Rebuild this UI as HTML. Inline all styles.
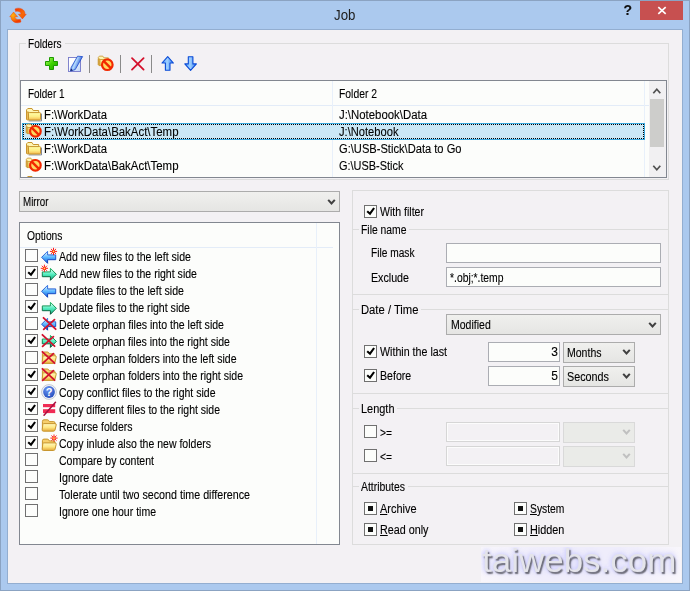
<!DOCTYPE html>
<html><head><meta charset="utf-8"><title>Job</title>
<style>
*{box-sizing:border-box;margin:0;padding:0}
html,body{width:690px;height:591px;overflow:hidden;background:#abc9ee}
body{position:relative;font-family:"Liberation Sans",sans-serif;font-size:12px;color:#000;line-height:13px}
.abs{position:absolute}
#frame{position:absolute;left:0;top:0;width:690px;height:591px;background:#abc9ee;border:1px solid #8ba3c2}
#client{position:absolute;left:7px;top:29px;width:676px;height:555px;background:#f3f1f4;border:1px solid #93aed0}
.t{position:absolute;white-space:pre;height:13px;line-height:13px;transform-origin:0 0;-webkit-text-stroke:0.12px #000}
.t u{text-decoration:underline}
.gb{position:absolute;border:1px solid #dcdcdc}
.bgp{position:absolute;background:#f3f1f4;height:13px}
.lv{position:absolute;background:#fcfdfb;border:1px solid #828790}
.edit{position:absolute;background:#fcfdfb;border:1px solid #abadb3;height:20px}
.edit.dis{background:#f3f1f4;border-color:#d6d6d6;box-shadow:inset 0 0 0 1px #fcfcfc}
.combo{position:absolute;border:1px solid #acacac;background:linear-gradient(#f0f0ee,#e5e5e3);height:21px}
.combo.dis{border-color:#d9d9d9;background:#eaebe8}
.cb{position:absolute;width:13px;height:13px;border:1px solid #707070;background:#fcfdfb}
.cb i{position:absolute;left:3px;top:3px;width:5px;height:5px;background:#111}
.hl{position:absolute;height:1px;background:#dcdcdc}
.vl{position:absolute;width:1px;background:#e8f0fa}
.sep{position:absolute;width:1px;height:18px;background:#8a8a8a}
</style></head><body>
<div id="frame"></div>
<div class="abs" style="left:640px;top:1px;width:43px;height:19px;background:#c75050"></div>
<svg class="abs" style="left:657px;top:6px" width="10" height="9" viewBox="0 0 10 9"><path d="M1.3 1.2 L8.7 7.8 M8.7 1.2 L1.3 7.8" stroke="#fff" stroke-width="1.7"/></svg>
<div id="client"></div>

<svg class="abs" style="left:10px;top:8px;overflow:visible" width="16" height="16" viewBox="0 0 16 16"><defs><linearGradient id="ai1" x1="0" y1="0" x2="1" y2="1"><stop offset="0" stop-color="#f23400"/><stop offset="0.6" stop-color="#f86a08"/><stop offset="1" stop-color="#f24800"/></linearGradient><radialGradient id="ai2" cx="0.75" cy="0.7" r="0.7"><stop offset="0" stop-color="#ffb010"/><stop offset="0.6" stop-color="#f87808"/><stop offset="1" stop-color="#f23c00"/></radialGradient></defs><path d="M5 0.9 C8 -0.5 12.2 0 14.2 3 C14.8 4 15 5 14.9 6.2 L16.3 6.2 L12.4 10.9 L8.4 6.2 L11 6.2 C11 4.6 9.6 3.3 7.6 3.3 C6.8 3.3 6.2 3.4 5.6 3.6 Z" fill="url(#ai1)" stroke="#f03800" stroke-width="0.4"/><path d="M5 0.9 C8 -0.5 12.2 0 14.2 3 C14.8 4 15 5 14.9 6.2 L16.3 6.2 L12.4 10.9 L8.4 6.2 L11 6.2 C11 4.6 9.6 3.3 7.6 3.3 C6.8 3.3 6.2 3.4 5.6 3.6 Z" transform="rotate(180 8 7.45)" fill="url(#ai2)" stroke="#f04000" stroke-width="0.4"/></svg>
<div class="gb" style="left:19px;top:43px;width:650px;height:137px"></div>
<div class="lv" style="left:20px;top:80px;width:647px;height:98px"></div>
<svg class="abs" style="left:44px;top:56px;overflow:visible" width="16" height="16" viewBox="0 0 16 16"><defs><linearGradient id="g1" x1="0" y1="0" x2="1" y2="1"><stop offset="0" stop-color="#b8ff70"/><stop offset="0.5" stop-color="#3fd400"/><stop offset="1" stop-color="#1fa000"/></linearGradient></defs><path d="M5.5 1.5h4v4h4v4h-4v4h-4v-4h-4v-4h4z" fill="url(#g1)" stroke="#1c9a00" stroke-width="1" stroke-linejoin="round"/></svg>
<svg class="abs" style="left:67px;top:56px;overflow:visible" width="16" height="16" viewBox="0 0 16 16"><defs><linearGradient id="g2" x1="0" y1="0" x2="1" y2="1"><stop offset="0.3" stop-color="#ffffff"/><stop offset="1" stop-color="#bcd4f8"/></linearGradient><linearGradient id="g3" x1="0" y1="0" x2="1" y2="0.5"><stop offset="0.1" stop-color="#1a48cc"/><stop offset="0.5" stop-color="#b4dcff"/><stop offset="0.9" stop-color="#1a48cc"/></linearGradient></defs><rect x="1.5" y="1.5" width="12" height="14" fill="url(#g2)" stroke="#7478c8" stroke-width="0.9"/><path d="M10.6 0.2 L15.6 0.6 L8.2 13.6 L3.5 15 L4.2 11.4 Z" fill="url(#g3)" stroke="#1a48cc" stroke-width="0.8" stroke-linejoin="round"/><path d="M3.5 15 L4 12.6 L6 14.2 Z" fill="#182060"/></svg>
<div class="sep" style="left:89px;top:55px"></div>
<svg class="abs" style="left:98px;top:56px;overflow:visible" width="16" height="16" viewBox="0 0 16 16"><g transform="translate(-0.9,-1.9) scale(0.82)"><defs><linearGradient id="g4" x1="0" y1="0" x2="0" y2="1"><stop offset="0" stop-color="#ffffa8"/><stop offset="0.55" stop-color="#fdec84"/><stop offset="1" stop-color="#f4b84c"/></linearGradient></defs><path d="M1.5 13.2 V3.9 L2.8 2.5 H7 L8.2 4.5 H13.7 V7 H1.5" fill="#fff6b4" stroke="#c8962e" stroke-width="1" stroke-linejoin="round"/><path d="M1.5 6 H3.6 V14 H2.3 L1.5 13.2 Z" fill="#ecbc58" stroke="#c8962e" stroke-width="1" stroke-linejoin="round"/><rect x="3.5" y="6.6" width="12" height="7.4" rx="0.8" fill="url(#g4)" stroke="#c8962e" stroke-width="1"/></g><circle cx="9.3" cy="8.7" r="5.3" fill="#ffd860" stroke="#f22800" stroke-width="2.2"/><path d="M5.55 4.95 L13.05 12.45" stroke="#f22800" stroke-width="2.4"/></svg>
<div class="sep" style="left:120px;top:55px"></div>
<svg class="abs" style="left:130px;top:56px;overflow:visible" width="16" height="16" viewBox="0 0 16 16"><path d="M2.0 2.2 L13.6 13.6 M13.6 2.2 L2.0 13.6" stroke="#d4102c" stroke-width="1.8" stroke-linecap="round" fill="none"/></svg>
<div class="sep" style="left:151px;top:55px"></div>
<svg class="abs" style="left:160px;top:56px;overflow:visible" width="16" height="16" viewBox="0 0 16 16"><defs><linearGradient id="g5" x1="0" y1="0" x2="1" y2="0"><stop offset="0" stop-color="#4a98f8"/><stop offset="0.45" stop-color="#a0d2ff"/><stop offset="1" stop-color="#2f7af0"/></linearGradient></defs><path d="M7.7 0.6 L13.4 7 H10 V14.3 H5.4 V7 H2 Z" fill="url(#g5)" stroke="#0a4ad6" stroke-width="1.1" stroke-linejoin="round"/></svg>
<svg class="abs" style="left:183px;top:56px;overflow:visible" width="16" height="16" viewBox="0 0 16 16"><defs><linearGradient id="g6" x1="0" y1="0" x2="1" y2="0"><stop offset="0" stop-color="#4a98f8"/><stop offset="0.45" stop-color="#a0d2ff"/><stop offset="1" stop-color="#2f7af0"/></linearGradient></defs><path d="M7.6 14.4 L13.4 7.9 H9.9 V0.7 H5.3 V7.9 H1.8 Z" fill="url(#g6)" stroke="#0a4ad6" stroke-width="1.1" stroke-linejoin="round"/></svg>
<div class="hl" style="left:21px;top:105px;width:628px;background:#e3ecf8"></div>
<div class="vl" style="left:332px;top:81px;height:96px"></div>
<div class="vl" style="left:644px;top:81px;height:96px"></div>
<div class="abs" style="left:22px;top:123px;width:623px;height:17px;background:#cbe8f6;border:1px solid #3aa8de"></div>
<div class="abs" style="left:23px;top:124px;width:621px;height:15px;border:1px dotted #000"></div>
<svg class="abs" style="left:25px;top:106px;overflow:visible" width="16" height="16" viewBox="0 0 16 16"><g transform="translate(0,0) scale(1)"><defs><linearGradient id="g7" x1="0" y1="0" x2="0" y2="1"><stop offset="0" stop-color="#ffffa8"/><stop offset="0.55" stop-color="#fdec84"/><stop offset="1" stop-color="#f4b84c"/></linearGradient></defs><path d="M16.5 7.6 V14.9 H3.6" stroke="#5c6474" stroke-width="0.9" fill="none" opacity="0.85"/><path d="M1.5 13.2 V3.9 L2.8 2.5 H7 L8.2 4.5 H13.7 V7 H1.5" fill="#fff6b4" stroke="#c8962e" stroke-width="1" stroke-linejoin="round"/><path d="M1.5 6 H3.6 V14 H2.3 L1.5 13.2 Z" fill="#ecbc58" stroke="#c8962e" stroke-width="1" stroke-linejoin="round"/><rect x="3.5" y="6.6" width="12" height="7.4" rx="0.8" fill="url(#g7)" stroke="#c8962e" stroke-width="1"/></g></svg>
<svg class="abs" style="left:25px;top:124px;overflow:visible" width="16" height="16" viewBox="0 0 16 16"><g transform="translate(0.1,-1.9) scale(0.82)"><defs><linearGradient id="g8" x1="0" y1="0" x2="0" y2="1"><stop offset="0" stop-color="#ffffa8"/><stop offset="0.55" stop-color="#fdec84"/><stop offset="1" stop-color="#f4b84c"/></linearGradient></defs><path d="M1.5 13.2 V3.9 L2.8 2.5 H7 L8.2 4.5 H13.7 V7 H1.5" fill="#fff6b4" stroke="#c8962e" stroke-width="1" stroke-linejoin="round"/><path d="M1.5 6 H3.6 V14 H2.3 L1.5 13.2 Z" fill="#ecbc58" stroke="#c8962e" stroke-width="1" stroke-linejoin="round"/><rect x="3.5" y="6.6" width="12" height="7.4" rx="0.8" fill="url(#g8)" stroke="#c8962e" stroke-width="1"/></g><circle cx="10.4" cy="7.3" r="5.3" fill="#ffd860" stroke="#f22800" stroke-width="2.2"/><path d="M6.65 3.55 L14.15 11.05" stroke="#f22800" stroke-width="2.4"/></svg>
<svg class="abs" style="left:25px;top:140px;overflow:visible" width="16" height="16" viewBox="0 0 16 16"><g transform="translate(0,0) scale(1)"><defs><linearGradient id="g9" x1="0" y1="0" x2="0" y2="1"><stop offset="0" stop-color="#ffffa8"/><stop offset="0.55" stop-color="#fdec84"/><stop offset="1" stop-color="#f4b84c"/></linearGradient></defs><path d="M16.5 7.6 V14.9 H3.6" stroke="#5c6474" stroke-width="0.9" fill="none" opacity="0.85"/><path d="M1.5 13.2 V3.9 L2.8 2.5 H7 L8.2 4.5 H13.7 V7 H1.5" fill="#fff6b4" stroke="#c8962e" stroke-width="1" stroke-linejoin="round"/><path d="M1.5 6 H3.6 V14 H2.3 L1.5 13.2 Z" fill="#ecbc58" stroke="#c8962e" stroke-width="1" stroke-linejoin="round"/><rect x="3.5" y="6.6" width="12" height="7.4" rx="0.8" fill="url(#g9)" stroke="#c8962e" stroke-width="1"/></g></svg>
<svg class="abs" style="left:25px;top:158px;overflow:visible" width="16" height="16" viewBox="0 0 16 16"><g transform="translate(0.1,-1.9) scale(0.82)"><defs><linearGradient id="g10" x1="0" y1="0" x2="0" y2="1"><stop offset="0" stop-color="#ffffa8"/><stop offset="0.55" stop-color="#fdec84"/><stop offset="1" stop-color="#f4b84c"/></linearGradient></defs><path d="M1.5 13.2 V3.9 L2.8 2.5 H7 L8.2 4.5 H13.7 V7 H1.5" fill="#fff6b4" stroke="#c8962e" stroke-width="1" stroke-linejoin="round"/><path d="M1.5 6 H3.6 V14 H2.3 L1.5 13.2 Z" fill="#ecbc58" stroke="#c8962e" stroke-width="1" stroke-linejoin="round"/><rect x="3.5" y="6.6" width="12" height="7.4" rx="0.8" fill="url(#g10)" stroke="#c8962e" stroke-width="1"/></g><circle cx="10.4" cy="7.3" r="5.3" fill="#ffd860" stroke="#f22800" stroke-width="2.2"/><path d="M6.65 3.55 L14.15 11.05" stroke="#f22800" stroke-width="2.4"/></svg>
<div class="abs" style="left:25px;top:174px;width:18px;height:3px;overflow:hidden"><svg class="abs" style="left:0px;top:0px;overflow:visible" width="16" height="16" viewBox="0 0 16 16"><g transform="translate(0,0) scale(1)"><defs><linearGradient id="g11" x1="0" y1="0" x2="0" y2="1"><stop offset="0" stop-color="#ffffa8"/><stop offset="0.55" stop-color="#fdec84"/><stop offset="1" stop-color="#f4b84c"/></linearGradient></defs><path d="M16.5 7.6 V14.9 H3.6" stroke="#5c6474" stroke-width="0.9" fill="none" opacity="0.85"/><path d="M1.5 13.2 V3.9 L2.8 2.5 H7 L8.2 4.5 H13.7 V7 H1.5" fill="#fff6b4" stroke="#c8962e" stroke-width="1" stroke-linejoin="round"/><path d="M1.5 6 H3.6 V14 H2.3 L1.5 13.2 Z" fill="#ecbc58" stroke="#c8962e" stroke-width="1" stroke-linejoin="round"/><rect x="3.5" y="6.6" width="12" height="7.4" rx="0.8" fill="url(#g11)" stroke="#c8962e" stroke-width="1"/></g></svg></div>
<div class="abs" style="left:649px;top:81px;width:17px;height:96px;background:#f1f0f2"></div>
<div class="abs" style="left:650px;top:99px;width:14px;height:48px;background:#cdcdcb"></div>
<svg class="abs" style="left:652px;top:87px" width="10" height="8" viewBox="0 0 10 8"><path d="M1.3 6.2 L4.8 2.2 L8.3 6.2" stroke="#505050" stroke-width="1.7" fill="none"/></svg>
<svg class="abs" style="left:652px;top:164px" width="10" height="8" viewBox="0 0 10 8"><path d="M1.3 1.8 L4.8 5.8 L8.3 1.8" stroke="#505050" stroke-width="1.7" fill="none"/></svg>
<div class="combo" style="left:19px;top:191px;width:321px"></div>
<svg class="abs" style="left:327px;top:199px" width="9" height="7" viewBox="0 0 9 7"><path d="M1.2 0.8 L4.5 4.5 L7.8 0.8" stroke="#404040" stroke-width="2" fill="none"/></svg>
<div class="lv" style="left:19px;top:222px;width:321px;height:323px"></div>
<div class="hl" style="left:20px;top:247px;width:313px;background:#e3ecf8"></div>
<div class="vl" style="left:316px;top:223px;height:321px"></div>
<div class="cb" style="left:25px;top:249px"></div>
<svg class="abs" style="left:41px;top:249px;overflow:visible" width="16" height="16" viewBox="0 0 16 16"><defs><linearGradient id="g12" x1="0" y1="0" x2="0" y2="1"><stop offset="0.1" stop-color="#d8f2ff"/><stop offset="0.5" stop-color="#5cb8ff"/><stop offset="0.95" stop-color="#1262e2"/></linearGradient><linearGradient id="g13" x1="0" y1="0" x2="0" y2="1"><stop offset="0" stop-color="#3a78e4"/><stop offset="1" stop-color="#0a38b4"/></linearGradient></defs><path d="M0.6 8.3 L6.6 2.3000000000000007 V5.9 H14.7 V10.700000000000001 H6.6 V14.3 Z" fill="url(#g12)" stroke="url(#g13)" stroke-width="1" stroke-linejoin="round"/><path d="M8.90 2.40 L16.10 2.40 M9.95 -0.15 L15.05 4.95 M12.50 -1.20 L12.50 6.00 M15.05 -0.15 L9.95 4.95 " stroke="#ff1010" stroke-width="0.95"/><circle cx="12.5" cy="2.4" r="1.5" fill="#ff2808"/><circle cx="12.5" cy="2.4" r="0.85" fill="#ffe860"/></svg>
<div class="cb" style="left:25px;top:266px"><svg class="abs" style="left:-1px;top:-1px" width="13" height="13" viewBox="0 0 13 13"><path d="M3.2 6.2 L6.0 8.7 L10.1 3.0" stroke="#000" stroke-width="2.1" fill="none"/></svg></div>
<svg class="abs" style="left:41px;top:266px;overflow:visible" width="16" height="16" viewBox="0 0 16 16"><defs><linearGradient id="g14" x1="0" y1="0" x2="0" y2="1"><stop offset="0.1" stop-color="#d4fff0"/><stop offset="0.5" stop-color="#54eec0"/><stop offset="0.95" stop-color="#12b484"/></linearGradient><linearGradient id="g15" x1="0" y1="0" x2="0" y2="1"><stop offset="0" stop-color="#22b868"/><stop offset="1" stop-color="#024c34"/></linearGradient></defs><path d="M15.4 8.3 L9.4 2.3000000000000007 V5.9 H1.3 V10.700000000000001 H9.4 V14.3 Z" fill="url(#g14)" stroke="url(#g15)" stroke-width="1" stroke-linejoin="round"/><path d="M-0.20 2.30 L7.00 2.30 M0.85 -0.25 L5.95 4.85 M3.40 -1.30 L3.40 5.90 M5.95 -0.25 L0.85 4.85 " stroke="#ff1010" stroke-width="0.95"/><circle cx="3.4" cy="2.3" r="1.5" fill="#ff2808"/><circle cx="3.4" cy="2.3" r="0.85" fill="#ffe860"/></svg>
<div class="cb" style="left:25px;top:283px"></div>
<svg class="abs" style="left:41px;top:283px;overflow:visible" width="16" height="16" viewBox="0 0 16 16"><defs><linearGradient id="g16" x1="0" y1="0" x2="0" y2="1"><stop offset="0.1" stop-color="#d8f2ff"/><stop offset="0.5" stop-color="#5cb8ff"/><stop offset="0.95" stop-color="#1262e2"/></linearGradient><linearGradient id="g17" x1="0" y1="0" x2="0" y2="1"><stop offset="0" stop-color="#3a78e4"/><stop offset="1" stop-color="#0a38b4"/></linearGradient></defs><path d="M0.6 8.3 L6.6 2.3000000000000007 V5.9 H14.7 V10.700000000000001 H6.6 V14.3 Z" fill="url(#g16)" stroke="url(#g17)" stroke-width="1" stroke-linejoin="round"/></svg>
<div class="cb" style="left:25px;top:300px"><svg class="abs" style="left:-1px;top:-1px" width="13" height="13" viewBox="0 0 13 13"><path d="M3.2 6.2 L6.0 8.7 L10.1 3.0" stroke="#000" stroke-width="2.1" fill="none"/></svg></div>
<svg class="abs" style="left:41px;top:300px;overflow:visible" width="16" height="16" viewBox="0 0 16 16"><defs><linearGradient id="g18" x1="0" y1="0" x2="0" y2="1"><stop offset="0.1" stop-color="#d4fff0"/><stop offset="0.5" stop-color="#54eec0"/><stop offset="0.95" stop-color="#12b484"/></linearGradient><linearGradient id="g19" x1="0" y1="0" x2="0" y2="1"><stop offset="0" stop-color="#22b868"/><stop offset="1" stop-color="#024c34"/></linearGradient></defs><path d="M15.4 8.3 L9.4 2.3000000000000007 V5.9 H1.3 V10.700000000000001 H9.4 V14.3 Z" fill="url(#g18)" stroke="url(#g19)" stroke-width="1" stroke-linejoin="round"/></svg>
<div class="cb" style="left:25px;top:317px"></div>
<svg class="abs" style="left:41px;top:317px;overflow:visible" width="16" height="16" viewBox="0 0 16 16"><defs><linearGradient id="g20" x1="0" y1="0" x2="0" y2="1"><stop offset="0.1" stop-color="#d8f2ff"/><stop offset="0.5" stop-color="#5cb8ff"/><stop offset="0.95" stop-color="#1262e2"/></linearGradient><linearGradient id="g21" x1="0" y1="0" x2="0" y2="1"><stop offset="0" stop-color="#3a78e4"/><stop offset="1" stop-color="#0a38b4"/></linearGradient></defs><path d="M0.6 7.200000000000001 L6.6 1.200000000000001 V4.800000000000001 H14.7 V9.600000000000001 H6.6 V13.200000000000001 Z" fill="url(#g20)" stroke="url(#g21)" stroke-width="1" stroke-linejoin="round"/><path d="M2.5 0.8 L14.7 12.2 M13.5 2.6 L2.7 12.4" stroke="#d2122e" stroke-width="1.8" stroke-linecap="round" fill="none"/></svg>
<div class="cb" style="left:25px;top:334px"><svg class="abs" style="left:-1px;top:-1px" width="13" height="13" viewBox="0 0 13 13"><path d="M3.2 6.2 L6.0 8.7 L10.1 3.0" stroke="#000" stroke-width="2.1" fill="none"/></svg></div>
<svg class="abs" style="left:41px;top:334px;overflow:visible" width="16" height="16" viewBox="0 0 16 16"><defs><linearGradient id="g22" x1="0" y1="0" x2="0" y2="1"><stop offset="0.1" stop-color="#d4fff0"/><stop offset="0.5" stop-color="#54eec0"/><stop offset="0.95" stop-color="#12b484"/></linearGradient><linearGradient id="g23" x1="0" y1="0" x2="0" y2="1"><stop offset="0" stop-color="#22b868"/><stop offset="1" stop-color="#024c34"/></linearGradient></defs><path d="M15.4 7.4 L9.4 1.4000000000000004 V5.0 H1.3 V9.8 H9.4 V13.4 Z" fill="url(#g22)" stroke="url(#g23)" stroke-width="1" stroke-linejoin="round"/><path d="M1.4 0.8 L13.6 12.2 M12.4 2.6 L1.6 12.4" stroke="#d2122e" stroke-width="1.8" stroke-linecap="round" fill="none"/></svg>
<div class="cb" style="left:25px;top:351px"></div>
<svg class="abs" style="left:41px;top:351px;overflow:visible" width="16" height="16" viewBox="0 0 16 16"><g transform="translate(0,-1.8)"><defs><linearGradient id="g24" x1="0" y1="0" x2="0" y2="1"><stop offset="0" stop-color="#fff8c0"/><stop offset="0.5" stop-color="#ffe884"/><stop offset="1" stop-color="#e4a838"/></linearGradient></defs><path d="M1.4 12.6 V4.4 Q1.4 2.8 3 2.8 H6.2 Q7.2 2.8 7.8 3.6 L8.4 4.6 H12.6 Q14 4.6 14 6 V7" fill="#f6cf6c" stroke="#c8962e" stroke-width="1"/><path d="M2.6 6.6 H14 Q15.6 6.6 15.2 8 L14 13 Q13.7 14.2 12.4 14.2 H2.4 Q0.9 14.2 1.2 12.8 L1.8 7.6 Q1.9 6.6 2.6 6.6 Z" fill="url(#g24)" stroke="#c8962e" stroke-width="1"/></g><path d="M1.4 0.8 L13.6 12.2 M12.4 2.6 L1.6 12.4" stroke="#d2122e" stroke-width="1.8" stroke-linecap="round" fill="none"/></svg>
<div class="cb" style="left:25px;top:368px"><svg class="abs" style="left:-1px;top:-1px" width="13" height="13" viewBox="0 0 13 13"><path d="M3.2 6.2 L6.0 8.7 L10.1 3.0" stroke="#000" stroke-width="2.1" fill="none"/></svg></div>
<svg class="abs" style="left:41px;top:368px;overflow:visible" width="16" height="16" viewBox="0 0 16 16"><g transform="translate(0,-1.8)"><defs><linearGradient id="g25" x1="0" y1="0" x2="0" y2="1"><stop offset="0" stop-color="#fff8c0"/><stop offset="0.5" stop-color="#ffe884"/><stop offset="1" stop-color="#e4a838"/></linearGradient></defs><path d="M1.4 12.6 V4.4 Q1.4 2.8 3 2.8 H6.2 Q7.2 2.8 7.8 3.6 L8.4 4.6 H12.6 Q14 4.6 14 6 V7" fill="#f6cf6c" stroke="#c8962e" stroke-width="1"/><path d="M2.6 6.6 H14 Q15.6 6.6 15.2 8 L14 13 Q13.7 14.2 12.4 14.2 H2.4 Q0.9 14.2 1.2 12.8 L1.8 7.6 Q1.9 6.6 2.6 6.6 Z" fill="url(#g25)" stroke="#c8962e" stroke-width="1"/></g><path d="M1.4 0.8 L13.6 12.2 M12.4 2.6 L1.6 12.4" stroke="#d2122e" stroke-width="1.8" stroke-linecap="round" fill="none"/></svg>
<div class="cb" style="left:25px;top:385px"><svg class="abs" style="left:-1px;top:-1px" width="13" height="13" viewBox="0 0 13 13"><path d="M3.2 6.2 L6.0 8.7 L10.1 3.0" stroke="#000" stroke-width="2.1" fill="none"/></svg></div>
<svg class="abs" style="left:41px;top:383.8px;overflow:visible" width="16" height="16" viewBox="0 0 16 16"><defs><radialGradient id="g26" cx="0.4" cy="0.3" r="0.8"><stop offset="0" stop-color="#6a98f4"/><stop offset="1" stop-color="#2048b8"/></radialGradient></defs><circle cx="8" cy="8" r="7.4" fill="#f4f6fa" stroke="#b8bcc8" stroke-width="0.8"/><circle cx="8" cy="8" r="5.9" fill="url(#g26)"/><text x="8" y="12" text-anchor="middle" font-family="Liberation Sans, sans-serif" font-weight="bold" font-size="11" fill="#fff">?</text></svg>
<div class="cb" style="left:25px;top:402px"><svg class="abs" style="left:-1px;top:-1px" width="13" height="13" viewBox="0 0 13 13"><path d="M3.2 6.2 L6.0 8.7 L10.1 3.0" stroke="#000" stroke-width="2.1" fill="none"/></svg></div>
<svg class="abs" style="left:41px;top:402px;overflow:visible" width="16" height="16" viewBox="0 0 16 16"><rect x="2" y="2" width="12.2" height="3.2" fill="#f02c54"/><rect x="2" y="7.2" width="12.2" height="3.9" fill="#f02c54"/><path d="M14.5 0.2 L3.0 13.3" stroke="#a81040" stroke-width="1.5" stroke-linecap="round"/></svg>
<div class="cb" style="left:25px;top:419px"><svg class="abs" style="left:-1px;top:-1px" width="13" height="13" viewBox="0 0 13 13"><path d="M3.2 6.2 L6.0 8.7 L10.1 3.0" stroke="#000" stroke-width="2.1" fill="none"/></svg></div>
<svg class="abs" style="left:41px;top:419px;overflow:visible" width="16" height="16" viewBox="0 0 16 16"><g transform="translate(0,-2)"><defs><linearGradient id="g27" x1="0" y1="0" x2="0" y2="1"><stop offset="0" stop-color="#fff8c0"/><stop offset="0.5" stop-color="#ffe884"/><stop offset="1" stop-color="#e4a838"/></linearGradient></defs><path d="M1.4 12.6 V4.4 Q1.4 2.8 3 2.8 H6.2 Q7.2 2.8 7.8 3.6 L8.4 4.6 H12.6 Q14 4.6 14 6 V7" fill="#f6cf6c" stroke="#c8962e" stroke-width="1"/><path d="M2.6 6.6 H14 Q15.6 6.6 15.2 8 L14 13 Q13.7 14.2 12.4 14.2 H2.4 Q0.9 14.2 1.2 12.8 L1.8 7.6 Q1.9 6.6 2.6 6.6 Z" fill="url(#g27)" stroke="#c8962e" stroke-width="1"/></g></svg>
<div class="cb" style="left:25px;top:436px"><svg class="abs" style="left:-1px;top:-1px" width="13" height="13" viewBox="0 0 13 13"><path d="M3.2 6.2 L6.0 8.7 L10.1 3.0" stroke="#000" stroke-width="2.1" fill="none"/></svg></div>
<svg class="abs" style="left:41px;top:436px;overflow:visible" width="16" height="16" viewBox="0 0 16 16"><g transform="translate(0,0.3)"><defs><linearGradient id="g28" x1="0" y1="0" x2="0" y2="1"><stop offset="0" stop-color="#fff8c0"/><stop offset="0.5" stop-color="#ffe884"/><stop offset="1" stop-color="#e4a838"/></linearGradient></defs><path d="M1.4 12.6 V4.4 Q1.4 2.8 3 2.8 H6.2 Q7.2 2.8 7.8 3.6 L8.4 4.6 H12.6 Q14 4.6 14 6 V7" fill="#f6cf6c" stroke="#c8962e" stroke-width="1"/><path d="M2.6 6.6 H14 Q15.6 6.6 15.2 8 L14 13 Q13.7 14.2 12.4 14.2 H2.4 Q0.9 14.2 1.2 12.8 L1.8 7.6 Q1.9 6.6 2.6 6.6 Z" fill="url(#g28)" stroke="#c8962e" stroke-width="1"/></g><path d="M9.40 2.10 L16.60 2.10 M10.45 -0.45 L15.55 4.65 M13.00 -1.50 L13.00 5.70 M15.55 -0.45 L10.45 4.65 " stroke="#ff1010" stroke-width="0.95"/><circle cx="13" cy="2.1" r="1.5" fill="#ff2808"/><circle cx="13" cy="2.1" r="0.85" fill="#ffe860"/></svg>
<div class="cb" style="left:25px;top:453px"></div>
<div class="cb" style="left:25px;top:470px"></div>
<div class="cb" style="left:25px;top:487px"></div>
<div class="cb" style="left:25px;top:504px"></div>
<div class="gb" style="left:352px;top:190px;width:317px;height:355px"></div>
<div class="hl" style="left:353px;top:229px;width:315px"></div>
<div class="hl" style="left:353px;top:294px;width:315px"></div>
<div class="hl" style="left:353px;top:309px;width:315px"></div>
<div class="hl" style="left:353px;top:393px;width:315px"></div>
<div class="hl" style="left:353px;top:408px;width:315px"></div>
<div class="hl" style="left:353px;top:473px;width:315px"></div>
<div class="hl" style="left:353px;top:486px;width:315px"></div>
<div class="cb" style="left:364px;top:205px"><svg class="abs" style="left:-1px;top:-1px" width="13" height="13" viewBox="0 0 13 13"><path d="M3.2 6.2 L6.0 8.7 L10.1 3.0" stroke="#000" stroke-width="2.1" fill="none"/></svg></div>
<div class="edit" style="left:446px;top:243px;width:215px"></div>
<div class="edit" style="left:446px;top:267px;width:215px"></div>
<div class="combo" style="left:446px;top:314px;width:215px"></div>
<svg class="abs" style="left:648px;top:321.5px" width="9" height="7" viewBox="0 0 9 7"><path d="M1.2 0.8 L4.5 4.5 L7.8 0.8" stroke="#404040" stroke-width="2" fill="none"/></svg>
<div class="cb" style="left:364px;top:345px"><svg class="abs" style="left:-1px;top:-1px" width="13" height="13" viewBox="0 0 13 13"><path d="M3.2 6.2 L6.0 8.7 L10.1 3.0" stroke="#000" stroke-width="2.1" fill="none"/></svg></div>
<div class="cb" style="left:364px;top:369px"><svg class="abs" style="left:-1px;top:-1px" width="13" height="13" viewBox="0 0 13 13"><path d="M3.2 6.2 L6.0 8.7 L10.1 3.0" stroke="#000" stroke-width="2.1" fill="none"/></svg></div>
<div class="edit" style="left:488px;top:342px;width:72px"></div>
<div class="edit" style="left:488px;top:366px;width:72px"></div>
<div class="combo" style="left:563px;top:342px;width:72px"></div>
<div class="combo" style="left:563px;top:366px;width:72px"></div>
<svg class="abs" style="left:622px;top:349px" width="9" height="7" viewBox="0 0 9 7"><path d="M1.2 0.8 L4.5 4.5 L7.8 0.8" stroke="#404040" stroke-width="2" fill="none"/></svg>
<svg class="abs" style="left:622px;top:373px" width="9" height="7" viewBox="0 0 9 7"><path d="M1.2 0.8 L4.5 4.5 L7.8 0.8" stroke="#404040" stroke-width="2" fill="none"/></svg>
<div class="cb" style="left:364px;top:425px"></div>
<div class="cb" style="left:364px;top:449px"></div>
<div class="edit dis" style="left:446px;top:422px;width:114px"></div>
<div class="edit dis" style="left:446px;top:446px;width:114px"></div>
<div class="combo dis" style="left:563px;top:422px;width:72px"></div>
<div class="combo dis" style="left:563px;top:446px;width:72px"></div>
<svg class="abs" style="left:622px;top:429px" width="9" height="7" viewBox="0 0 9 7"><path d="M1.2 0.8 L4.5 4.5 L7.8 0.8" stroke="#c0c0c0" stroke-width="2" fill="none"/></svg>
<svg class="abs" style="left:622px;top:453px" width="9" height="7" viewBox="0 0 9 7"><path d="M1.2 0.8 L4.5 4.5 L7.8 0.8" stroke="#c0c0c0" stroke-width="2" fill="none"/></svg>
<div class="cb" style="left:364px;top:502px"><i></i></div>
<div class="cb" style="left:364px;top:523px"><i></i></div>
<div class="cb" style="left:514px;top:502px"><i></i></div>
<div class="cb" style="left:514px;top:523px"><i></i></div>
<div id="txt" style="position:absolute;left:0;top:0;width:690px;height:591px;will-change:transform">
<div class="t" style="left:334px;top:6px;font-size:15px;height:17px;line-height:17px;color:#202020;-webkit-text-stroke:0;transform:scaleX(0.885)">Job</div>
<div class="t" style="left:623.5px;top:2px;font-size:14px;font-weight:bold;height:16px;line-height:16px;color:#111">?</div>
<div class="bgp" style="left:26.0px;top:38px;width:38.5px"></div>
<div class="t" style="left:28.0px;top:38px;transform:scaleX(0.8372)">Folders</div>
<div class="t" style="left:28.0px;top:88px;transform:scaleX(0.8290)">Folder 1</div>
<div class="t" style="left:339.0px;top:88px;transform:scaleX(0.8630)">Folder 2</div>
<div class="t" style="left:44.0px;top:109px;transform:scaleX(0.9385)">F:\WorkData</div>
<div class="t" style="left:339.0px;top:109px;transform:scaleX(0.9491)">J:\Notebook\Data</div>
<div class="t" style="left:44.0px;top:126px;transform:scaleX(0.9528)">F:\WorkData\BakAct\Temp</div>
<div class="t" style="left:339.0px;top:126px;transform:scaleX(0.9290)">J:\Notebook</div>
<div class="t" style="left:44.0px;top:143px;transform:scaleX(0.9385)">F:\WorkData</div>
<div class="t" style="left:339.0px;top:143px;transform:scaleX(0.9277)">G:\USB-Stick\Data to Go</div>
<div class="t" style="left:44.0px;top:160px;transform:scaleX(0.9528)">F:\WorkData\BakAct\Temp</div>
<div class="t" style="left:339.0px;top:160px;transform:scaleX(0.9125)">G:\USB-Stick</div>
<div class="t" style="left:23.0px;top:196px;transform:scaleX(0.8140)">Mirror</div>
<div class="t" style="left:27.0px;top:230px;transform:scaleX(0.8583)">Options</div>
<div class="t" style="left:59.0px;top:251px;transform:scaleX(0.8834)">Add new files to the left side</div>
<div class="t" style="left:59.0px;top:268px;transform:scaleX(0.8803)">Add new files to the right side</div>
<div class="t" style="left:59.0px;top:285px;transform:scaleX(0.8839)">Update files to the left side</div>
<div class="t" style="left:59.0px;top:302px;transform:scaleX(0.8806)">Update files to the right side</div>
<div class="t" style="left:59.0px;top:319px;transform:scaleX(0.8802)">Delete orphan files into the left side</div>
<div class="t" style="left:59.0px;top:336px;transform:scaleX(0.8778)">Delete orphan files into the right side</div>
<div class="t" style="left:59.0px;top:353px;transform:scaleX(0.8782)">Delete orphan folders into the left side</div>
<div class="t" style="left:59.0px;top:370px;transform:scaleX(0.8784)">Delete orphan folders into the right side</div>
<div class="t" style="left:59.0px;top:387px;transform:scaleX(0.8754)">Copy conflict files to the right side</div>
<div class="t" style="left:59.0px;top:404px;transform:scaleX(0.8724)">Copy different files to the right side</div>
<div class="t" style="left:59.0px;top:421px;transform:scaleX(0.8745)">Recurse folders</div>
<div class="t" style="left:59.0px;top:438px;transform:scaleX(0.8764)">Copy inlude also the new folders</div>
<div class="t" style="left:59.0px;top:455px;transform:scaleX(0.8791)">Compare by content</div>
<div class="t" style="left:59.0px;top:472px;transform:scaleX(0.8893)">Ignore date</div>
<div class="t" style="left:59.0px;top:489px;transform:scaleX(0.8929)">Tolerate until two second time difference</div>
<div class="t" style="left:59.0px;top:506px;transform:scaleX(0.8758)">Ignore one hour time</div>
<div class="t" style="left:379.5px;top:206px;transform:scaleX(0.8797)">With filter</div>
<div class="bgp" style="left:358.5px;top:224px;width:50.5px"></div>
<div class="t" style="left:360.5px;top:224px;transform:scaleX(0.8636)">File name</div>
<div class="t" style="left:371.0px;top:247px;transform:scaleX(0.8472)">File mask</div>
<div class="t" style="left:371.0px;top:272px;transform:scaleX(0.8899)">Exclude</div>
<div class="t" style="left:449.5px;top:272px;transform:scaleX(0.8623)">*.obj;*.temp</div>
<div class="bgp" style="left:358.5px;top:304px;width:62.5px"></div>
<div class="t" style="left:360.5px;top:304px;transform:scaleX(0.9371)">Date / Time</div>
<div class="t" style="left:450.5px;top:319px;transform:scaleX(0.8763)">Modified</div>
<div class="t" style="left:379.5px;top:346px;transform:scaleX(0.8889)">Within the last</div>
<div class="t" style="left:379.8px;top:370px;transform:scaleX(0.8824)">Before</div>
<div class="t" style="left:551.25px;top:346px;transform:scaleX(1.0000)">3</div>
<div class="t" style="left:551.25px;top:370px;transform:scaleX(1.0000)">5</div>
<div class="t" style="left:567.0px;top:347px;transform:scaleX(0.8765)">Months</div>
<div class="t" style="left:567.0px;top:371px;transform:scaleX(0.8993)">Seconds</div>
<div class="bgp" style="left:358.5px;top:403px;width:38.5px"></div>
<div class="t" style="left:360.5px;top:403px;transform:scaleX(0.9127)">Length</div>
<div class="t" style="left:380.0px;top:427px;transform:scaleX(0.8562)">&gt;=</div>
<div class="t" style="left:380.0px;top:451px;transform:scaleX(0.8562)">&lt;=</div>
<div class="bgp" style="left:358.5px;top:481px;width:49px"></div>
<div class="t" style="left:360.5px;top:481px;transform:scaleX(0.8678)">Attributes</div>
<div class="t" style="left:379.5px;top:503px;transform:scaleX(0.9121)"><u>A</u>rchive</div>
<div class="t" style="left:379.5px;top:524px;transform:scaleX(0.8974)"><u>R</u>ead only</div>
<div class="t" style="left:529.5px;top:503px;transform:scaleX(0.8597)"><u>S</u>ystem</div>
<div class="t" style="left:529.5px;top:524px;transform:scaleX(0.9045)"><u>H</u>idden</div>
</div>
<div class="abs" style="left:481px;top:547px;width:200px;height:35px;background:linear-gradient(90deg,#f8f6fb,#efedfb 30%,#efedfb 70%,#f8f6fb);"></div>
<div class="abs" style="left:481px;top:547px;width:200px;height:35px;overflow:hidden;will-change:transform"><div class="t" style="left:0.5px;top:-6px;font-size:33px;height:40px;line-height:40px;-webkit-text-stroke:0;color:#e4e4ea;text-shadow:1.5px 1.5px 1.4px #666670,0 0 4px #c4c4ff,0 0 7px #d0d0ff;transform:scaleX(1.06)" id="wm">taiwebs.com</div></div>
</body></html>
